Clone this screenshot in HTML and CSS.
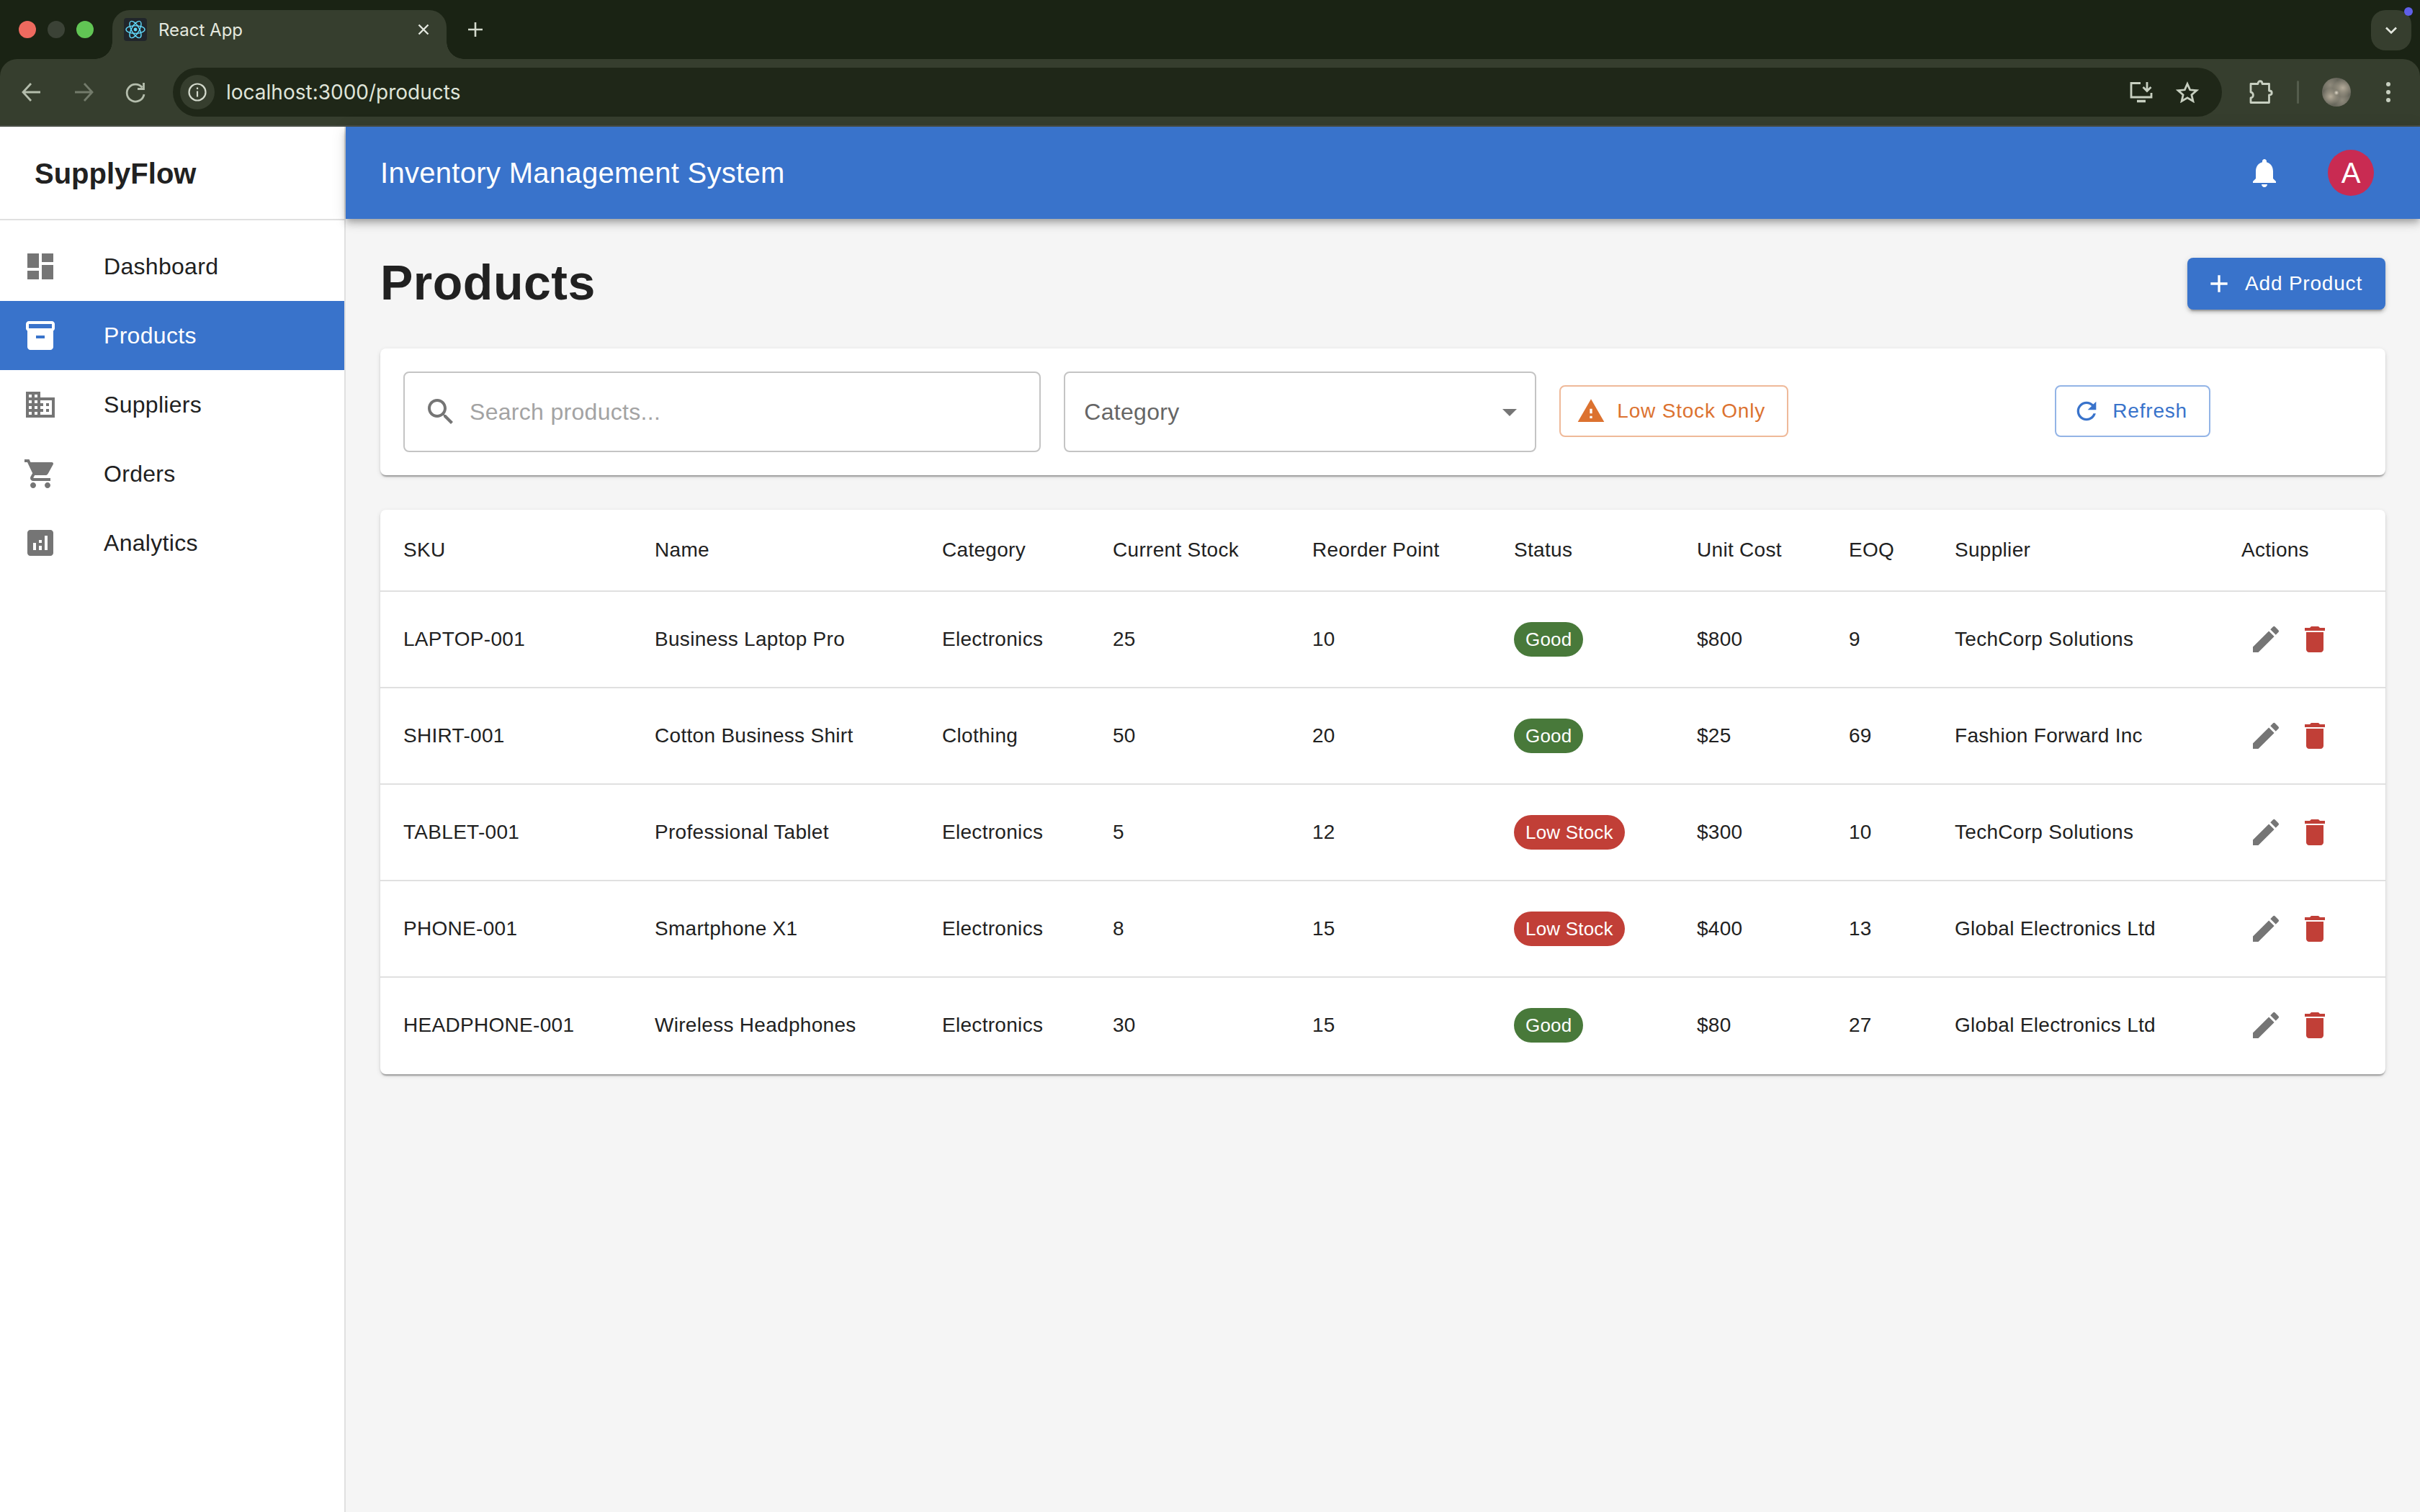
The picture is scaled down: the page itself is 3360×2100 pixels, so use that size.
FILE: index.html
```html
<!DOCTYPE html>
<html lang="en">
<head>
  <meta charset="UTF-8" />
  <title>React App</title>
  <link rel="stylesheet" href="styles.css">
</head>
<body>
  <svg class="defs" aria-hidden="true">
    <symbol id="i-edit" viewBox="0 0 24 24"><path d="M3 17.25V21h3.75L17.81 9.94l-3.75-3.75L3 17.25zM20.71 7.04c.39-.39.39-1.02 0-1.41l-2.34-2.34a.9959.9959 0 0 0-1.41 0l-1.83 1.83 3.75 3.75 1.83-1.83z"/></symbol>
    <symbol id="i-delete" viewBox="0 0 24 24"><path d="M6 19c0 1.1.9 2 2 2h8c1.1 0 2-.9 2-2V7H6v12zM19 4h-3.5l-1-1h-5l-1 1H5v2h14V4z"/></symbol>
  </svg>

  <header class="browser">
    <div class="tabstrip">
      <div class="lights">
        <span class="light red"></span>
        <span class="light off"></span>
        <span class="light green"></span>
      </div>
      <div class="tab">
        <span class="favicon">
          <svg viewBox="0 0 32 32" fill="none" stroke="#61dafb" stroke-width="1.4">
            <ellipse cx="16" cy="16" rx="13" ry="5.4"/>
            <ellipse cx="16" cy="16" rx="13" ry="5.4" transform="rotate(60 16 16)"/>
            <ellipse cx="16" cy="16" rx="13" ry="5.4" transform="rotate(120 16 16)"/>
            <circle cx="16" cy="16" r="2.4" fill="#61dafb" stroke="none"/>
          </svg>
        </span>
        <span class="tab-title">React App</span>
        <svg class="tab-close" viewBox="0 0 20 20" fill="none" stroke="#e4e8df" stroke-width="2.4"><path d="M3.5 3.5l13 13M16.500 3.500l-13 13"/></svg>
      </div>
      <svg class="new-tab" viewBox="0 0 24 24" fill="none" stroke="#d3d9cc" stroke-width="2.6"><path d="M12 2v20M2 12h20"/></svg>
      <div class="tab-search">
        <svg viewBox="0 0 20 20" fill="none" stroke="#e4e8df" stroke-width="2.6"><path d="M3 6.500l7 7 7-7"/></svg>
        <span class="tab-search-dot"></span>
      </div>
    </div>
    <div class="toolbar">
      <svg class="tool" viewBox="0 0 40 40" fill="none" stroke="#b4bdac" stroke-width="2.800"><path d="M32 20H8M19 8L8 20l11 12"/></svg>
      <svg class="tool" viewBox="0 0 40 40" fill="none" stroke="#737b6b" stroke-width="2.800"><path d="M8 20h24M21 8l11 12-11 12"/></svg>
      <svg class="tool" viewBox="0 0 40 40" fill="none" stroke="#b4bdac" stroke-width="2.800"><path d="M29.500 13.500A12 12 0 1 0 32 23"/><path d="M31.500 7v8.500H23" /></svg>
      <div class="omnibox">
        <span class="info-chip">
          <svg viewBox="0 0 28 28" fill="none" stroke="#d3d9cc" stroke-width="2.200"><circle cx="14" cy="14" r="11.500"/><path d="M14 12.500v8M14 7.500v2.600"/></svg>
        </span>
        <span class="url">localhost:3000/products</span>
        <div class="omni-actions">
          <svg viewBox="0 0 32 28" fill="none" stroke="#c7cfc0" stroke-width="2.800"><path d="M15 1.500H2v19.500h28v-6"/><path d="M10 26.500h12" stroke-width="3.500"/><path d="M24 0v12M18.500 7l5.500 5.500L29.500 7"/></svg>
          <svg viewBox="0 0 32 30" fill="none" stroke="#c7cfc0" stroke-width="2.800" stroke-linejoin="miter"><path d="M16 3.500l3.700 8.300 9 .9-6.800 6 2 8.800-7.900-4.600-7.900 4.600 2-8.800-6.800-6 9-.9z"/></svg>
        </div>
      </div>
      <svg class="ext" viewBox="0 0 36 36" fill="none" stroke="#c7cfc0" stroke-width="2.800" stroke-linejoin="round"><path d="M4 6.500h10c0-5 6-5 6 0h9.500v9.500c5 0 5 6 0 6v10.500H4V26c4.500 0 4.500-8 0-8z"/></svg>
      <span class="tool-divider"></span>
      <span class="profile"></span>
      <svg class="tool dots" viewBox="0 0 40 40" fill="#c7cfc0"><circle cx="20" cy="9" r="3"/><circle cx="20" cy="20" r="3"/><circle cx="20" cy="31" r="3"/></svg>
    </div>
  </header>

  <div class="app">
    <aside class="sidebar">
      <div class="brand">SupplyFlow</div>
      <nav class="nav">
        <a class="nav-item">
          <svg class="icon" viewBox="0 0 24 24"><path d="M3 13h8V3H3v10zm0 8h8v-6H3v6zm10 0h8V11h-8v10zm0-18v6h8V3h-8z"/></svg>
          <span>Dashboard</span>
        </a>
        <a class="nav-item active">
          <svg class="icon" viewBox="0 0 24 24"><path d="M20 2H4c-1 0-2 .9-2 2v3.010c0 .72.43 1.340 1 1.690V20c0 1.100 1.100 2 2 2h14c.9 0 2-.9 2-2V8.700c.57-.35 1-.97 1-1.690V4c0-1.100-1-2-2-2zm-5 12H9v-2h6v2zm5-7H4V4l16-.02V7z"/></svg>
          <span>Products</span>
        </a>
        <a class="nav-item">
          <svg class="icon" viewBox="0 0 24 24"><path d="M12 7V3H2v18h20V7H12zM6 19H4v-2h2v2zm0-4H4v-2h2v2zm0-4H4V9h2v2zm0-4H4V5h2v2zm4 12H8v-2h2v2zm0-4H8v-2h2v2zm0-4H8V9h2v2zm0-4H8V5h2v2zm10 12h-8v-2h2v-2h-2v-2h2v-2h-2V9h8v10zm-2-8h-2v2h2v-2zm0 4h-2v2h2v-2z"/></svg>
          <span>Suppliers</span>
        </a>
        <a class="nav-item">
          <svg class="icon" viewBox="0 0 24 24"><path d="M7 18c-1.100 0-1.990.9-1.990 2S5.900 22 7 22s2-.9 2-2-.9-2-2-2zM1 2v2h2l3.600 7.590-1.350 2.450c-.16.28-.25.61-.25.96 0 1.100.9 2 2 2h12v-2H7.420c-.14 0-.25-.11-.25-.25l.03-.12.9-1.630h7.450c.75 0 1.410-.41 1.750-1.030l3.580-6.490c.08-.14.12-.31.12-.48 0-.55-.45-1-1-1H5.210l-.94-2H1zm16 16c-1.100 0-1.990.9-1.990 2s.89 2 1.990 2 2-.9 2-2-.9-2-2-2z"/></svg>
          <span>Orders</span>
        </a>
        <a class="nav-item">
          <svg class="icon" viewBox="0 0 24 24"><path d="M19 3H5c-1.100 0-2 .9-2 2v14c0 1.100.9 2 2 2h14c1.100 0 2-.9 2-2V5c0-1.100-.9-2-2-2zM9 17H7v-5h2v5zm4 0h-2v-3h2v3zm0-5h-2v-2h2v2zm4 5h-2V7h2v10z"/></svg>
          <span>Analytics</span>
        </a>
      </nav>
    </aside>

    <div class="content">
      <div class="appbar">
        <div class="appbar-title">Inventory Management System</div>
        <svg class="icon bell" viewBox="0 0 24 24"><path d="M12 22c1.100 0 2-.9 2-2h-4c0 1.100.89 2 2 2zm6-6v-5c0-3.070-1.640-5.640-4.500-6.320V4c0-.83-.67-1.500-1.500-1.500s-1.500.67-1.500 1.500v.68C7.630 5.360 6 7.920 6 11v5l-2 2v1h16v-1l-2-2z"/></svg>
        <div class="avatar">A</div>
      </div>

      <main class="main">
        <div class="page-head">
          <h1>Products</h1>
          <button class="btn btn-primary">
            <svg viewBox="0 0 24 24"><path d="M19 13h-6v6h-2v-6H5v-2h6V5h2v6h6v2z"/></svg>
            Add Product
          </button>
        </div>

        <section class="card filters">
          <div class="field field-search">
            <svg class="icon" viewBox="0 0 24 24"><path d="M15.500 14h-.79l-.28-.27C15.410 12.590 16 11.110 16 9.500 16 5.910 13.090 3 9.500 3S3 5.910 3 9.500 5.910 16 9.500 16c1.610 0 3.090-.59 4.230-1.570l.27.28v.79l5 4.990L20.490 19l-4.990-5zm-6 0C7.010 14 5 11.990 5 9.500S7.010 5 9.500 5 14 7.010 14 9.500 11.990 14 9.500 14z"/></svg>
            <input type="text" placeholder="Search products...">
          </div>
          <div class="field field-select">
            <span>Category</span>
            <svg class="icon" viewBox="0 0 24 24"><path d="M7 10l5 5 5-5z"/></svg>
          </div>
          <div class="filter-cell">
            <button class="btn btn-warning">
              <svg viewBox="0 0 24 24"><path d="M1 21h22L12 2 1 21zm12-3h-2v-2h2v2zm0-4h-2v-4h2v4z"/></svg>
              Low Stock Only
            </button>
          </div>
          <div class="filter-cell">
            <button class="btn btn-outline">
              <svg viewBox="0 0 24 24"><path d="M17.650 6.350C16.200 4.900 14.210 4 12 4c-4.420 0-7.990 3.580-7.990 8s3.570 8 7.990 8c3.730 0 6.840-2.550 7.730-6h-2.080c-.82 2.330-3.040 4-5.650 4-3.310 0-6-2.690-6-6s2.690-6 6-6c1.660 0 3.140.69 4.220 1.780L13 11h7V4l-2.350 2.350z"/></svg>
              Refresh
            </button>
          </div>
        </section>

        <section class="card">
          <table class="products">
            <colgroup>
              <col class="c-sku"><col class="c-name"><col class="c-cat"><col class="c-stock"><col class="c-reorder">
              <col class="c-status"><col class="c-cost"><col class="c-eoq"><col class="c-supplier"><col class="c-actions">
            </colgroup>
            <thead>
              <tr><th>SKU</th><th>Name</th><th>Category</th><th>Current Stock</th><th>Reorder Point</th><th>Status</th><th>Unit Cost</th><th>EOQ</th><th>Supplier</th><th>Actions</th></tr>
            </thead>
            <tbody>
              <tr>
                <td>LAPTOP-001</td><td>Business Laptop Pro</td><td>Electronics</td><td>25</td><td>10</td>
                <td><span class="chip good">Good</span></td><td>$800</td><td>9</td><td>TechCorp Solutions</td>
                <td class="actions"><svg class="act edit"><use href="#i-edit"/></svg><svg class="act del"><use href="#i-delete"/></svg></td>
              </tr>
              <tr>
                <td>SHIRT-001</td><td>Cotton Business Shirt</td><td>Clothing</td><td>50</td><td>20</td>
                <td><span class="chip good">Good</span></td><td>$25</td><td>69</td><td>Fashion Forward Inc</td>
                <td class="actions"><svg class="act edit"><use href="#i-edit"/></svg><svg class="act del"><use href="#i-delete"/></svg></td>
              </tr>
              <tr>
                <td>TABLET-001</td><td>Professional Tablet</td><td>Electronics</td><td>5</td><td>12</td>
                <td><span class="chip low">Low Stock</span></td><td>$300</td><td>10</td><td>TechCorp Solutions</td>
                <td class="actions"><svg class="act edit"><use href="#i-edit"/></svg><svg class="act del"><use href="#i-delete"/></svg></td>
              </tr>
              <tr>
                <td>PHONE-001</td><td>Smartphone X1</td><td>Electronics</td><td>8</td><td>15</td>
                <td><span class="chip low">Low Stock</span></td><td>$400</td><td>13</td><td>Global Electronics Ltd</td>
                <td class="actions"><svg class="act edit"><use href="#i-edit"/></svg><svg class="act del"><use href="#i-delete"/></svg></td>
              </tr>
              <tr>
                <td>HEADPHONE-001</td><td>Wireless Headphones</td><td>Electronics</td><td>30</td><td>15</td>
                <td><span class="chip good">Good</span></td><td>$80</td><td>27</td><td>Global Electronics Ltd</td>
                <td class="actions"><svg class="act edit"><use href="#i-edit"/></svg><svg class="act del"><use href="#i-delete"/></svg></td>
              </tr>
            </tbody>
          </table>
        </section>
      </main>
    </div>
  </div>
</body>
</html>
```

FILE: styles.css
```css
* {
  box-sizing: border-box;
}
body {
  margin: 0;
  height: 100vh;
  display: flex;
  flex-direction: column;
  font-family: "Liberation Sans", Arial, sans-serif;
  color: #212121;
  background: #f5f5f5;
  overflow: hidden;
}
.defs {
  display: none;
}
.icon {
  width: 48px;
  height: 48px;
  flex: none;
  fill: #757575;
}

/* browser chrome */
.browser {
  background: #1a2314;
  flex: none;
  font-family: Inter, "Liberation Sans", sans-serif;
}
.tabstrip {
  height: 82px;
  display: flex;
  padding-left: 26px;
  padding-right: 12px;
}
.lights {
  display: flex;
  gap: 16px;
  padding-top: 29px;
}
.light {
  width: 24px;
  height: 24px;
  border-radius: 50%;
}
.light.red { background: #ee6a5f; }
.light.off { background: #3b4236; }
.light.green { background: #61c554; }
.tab {
  position: relative;
  margin-left: 26px;
  margin-top: 14px;
  width: 464px;
  height: 68px;
  padding: 0 22px 14px 16px;
  display: flex;
  align-items: center;
  background: #363e2e;
  border-radius: 24px 24px 0 0;
}
.tab::before,
.tab::after {
  content: "";
  position: absolute;
  bottom: 0;
  width: 24px;
  height: 24px;
}
.tab::before {
  left: -24px;
  background: radial-gradient(circle at 0 0, transparent 23.5px, #363e2e 24px);
}
.tab::after {
  right: -24px;
  background: radial-gradient(circle at 100% 0, transparent 23.5px, #363e2e 24px);
}
.favicon {
  width: 32px;
  height: 32px;
  border-radius: 4px;
  background: #21262b;
}
.favicon svg {
  display: block;
}
.tab-title {
  margin-left: 16px;
  font-size: 24px;
  color: #e4e8df;
  flex: 1;
}
.tab-close {
  width: 20px;
  height: 20px;
}
.new-tab {
  width: 24px;
  height: 24px;
  margin: 29px 0 0 28px;
}
.tab-search {
  position: relative;
  margin: 14px 0 0 auto;
  width: 56px;
  height: 56px;
  border-radius: 20px;
  background: #363e2e;
  display: flex;
  align-items: center;
  justify-content: center;
}
.tab-search svg {
  width: 20px;
  height: 20px;
}
.tab-search-dot {
  position: absolute;
  right: -2px;
  top: -4px;
  width: 12px;
  height: 12px;
  border-radius: 50%;
  background: #5f5fe8;
}
.toolbar {
  height: 94px;
  display: flex;
  align-items: center;
  gap: 32px;
  padding: 0 24px;
  background: #363e2e;
  border-bottom: 2px solid #4a4f47;
  border-radius: 24px 24px 0 0;
}
.tool {
  width: 40px;
  height: 40px;
  flex: none;
}
.omnibox {
  flex: 1;
  height: 68px;
  display: flex;
  align-items: center;
  padding: 0 32px 0 10px;
  background: #1f2718;
  border-radius: 34px;
}
.info-chip {
  width: 48px;
  height: 48px;
  border-radius: 50%;
  background: #363e2e;
  display: flex;
  align-items: center;
  justify-content: center;
}
.info-chip svg {
  width: 28px;
  height: 28px;
}
.url {
  margin-left: 16px;
  font-size: 28px;
  color: #dfe4d9;
}
.omni-actions {
  margin-left: auto;
  display: flex;
  gap: 32px;
  align-items: center;
}
.omni-actions svg {
  width: 32px;
  height: 30px;
}
.ext {
  width: 36px;
  height: 36px;
  flex: none;
  margin-left: 4px;
}
.tool-divider {
  width: 3px;
  height: 32px;
  background: #545c4c;
  border-radius: 2px;
  flex: none;
}
.profile {
  width: 40px;
  height: 40px;
  flex: none;
  border-radius: 50%;
  background:
    radial-gradient(circle at 50% 52%, #e0d8c8 0, transparent 12%),
    radial-gradient(ellipse at 30% 65%, #b5ac9a 0, transparent 32%),
    radial-gradient(ellipse at 72% 35%, #b5ac9a 0, transparent 34%),
    radial-gradient(ellipse at 70% 78%, #8f8a7c 0, transparent 30%),
    radial-gradient(ellipse at 28% 25%, #8f8a7c 0, transparent 30%),
    #68675c;
}

/* app shell */
.app {
  flex: 1;
  display: flex;
  min-height: 0;
}
.sidebar {
  width: 480px;
  flex: none;
  background: #fff;
  border-right: 2px solid #e0e0e0;
}
.brand {
  height: 130px;
  padding: 2px 48px 0;
  display: flex;
  align-items: center;
  font-size: 40px;
  font-weight: bold;
  border-bottom: 2px solid #e0e0e0;
}
.nav {
  padding-top: 16px;
}
.nav-item {
  height: 96px;
  display: flex;
  align-items: center;
  padding-left: 32px;
  font-size: 32px;
  letter-spacing: 0.3px;
}
.nav-item .icon {
  margin-right: 64px;
}
.nav-item.active {
  background: #3973cb;
  color: #fff;
}
.nav-item.active .icon {
  fill: #fff;
}
.content {
  flex: 1;
  min-width: 0;
  display: flex;
  flex-direction: column;
}
.appbar {
  height: 128px;
  flex: none;
  display: flex;
  align-items: center;
  padding: 0 64px 0 48px;
  background: #3973cb;
  color: #fff;
  box-shadow: 0 4px 8px -2px rgba(0,0,0,.2), 0 8px 10px rgba(0,0,0,.14), 0 2px 20px rgba(0,0,0,.12);
  position: relative;
}
.appbar-title {
  flex: 1;
  font-size: 40px;
  letter-spacing: 0.3px;
}
.bell {
  fill: #fff;
}
.avatar {
  width: 64px;
  height: 64px;
  margin-left: 64px;
  border-radius: 50%;
  background: #c92b52;
  display: flex;
  align-items: center;
  justify-content: center;
  font-size: 40px;
}

/* main */
.main {
  flex: 1;
  padding: 48px;
}
.page-head {
  display: flex;
  align-items: center;
  justify-content: space-between;
  margin-bottom: 48px;
}
h1 {
  margin: 0 0 4px;
  font-size: 68px;
  line-height: 80px;
  font-weight: bold;
  letter-spacing: 0.5px;
}
.btn {
  height: 72px;
  display: inline-flex;
  align-items: center;
  gap: 16px;
  font-family: inherit;
  font-size: 28px;
  letter-spacing: 0.8px;
  border-radius: 8px;
  background: none;
  cursor: pointer;
}
.btn svg {
  width: 40px;
  height: 40px;
  fill: currentColor;
}
.btn-primary {
  padding: 0 32px 0 24px;
  border: none;
  background: #3973cb;
  color: #fff;
  box-shadow: 0 6px 2px -4px rgba(0,0,0,.2), 0 4px 4px rgba(0,0,0,.14), 0 2px 10px rgba(0,0,0,.12);
}
.btn-warning {
  padding: 0 30px 0 22px;
  border: 2px solid #efb999;
  color: #dc7230;
}
.btn-outline {
  padding: 0 30px 0 22px;
  border: 2px solid #93b4e6;
  color: #3973cb;
}
.card {
  background: #fff;
  border-radius: 8px;
  box-shadow: 0 4px 2px -2px rgba(0,0,0,.2), 0 2px 2px rgba(0,0,0,.14), 0 2px 6px rgba(0,0,0,.12);
}
.filters {
  display: grid;
  grid-template-columns: repeat(12, 1fr);
  gap: 32px;
  padding: 32px;
  margin-bottom: 48px;
  align-items: center;
}
.field {
  height: 112px;
  display: flex;
  align-items: center;
  border: 2px solid #c4c4c4;
  border-radius: 8px;
  font-size: 32px;
  letter-spacing: 0.3px;
}
.field-search {
  grid-column: span 4;
  padding-left: 26px;
  gap: 16px;
}
.field-search input {
  flex: 1;
  min-width: 0;
  border: none;
  outline: none;
  padding: 0;
  font: inherit;
  letter-spacing: inherit;
  color: #212121;
}
.field-search input::placeholder {
  color: #a3a3a3;
  opacity: 1;
}
.field-select {
  grid-column: span 3;
  padding: 0 11px 0 26px;
  justify-content: space-between;
  color: #666;
}
.filter-cell {
  grid-column: span 3;
  display: flex;
  padding-bottom: 2px;
}
.filter-cell:last-child {
  grid-column: span 2;
}

/* table */
.products {
  width: 100%;
  table-layout: fixed;
  border-collapse: separate;
  border-spacing: 0;
  font-size: 28px;
  letter-spacing: 0.3px;
}
.c-sku { width: 349px; }
.c-name { width: 399px; }
.c-cat { width: 237px; }
.c-stock { width: 277px; }
.c-reorder { width: 280px; }
.c-status { width: 254px; }
.c-cost { width: 211px; }
.c-eoq { width: 147px; }
.c-supplier { width: 398px; }
.c-actions { width: 232px; }
.products th,
.products td {
  padding: 0 0 0 32px;
  text-align: left;
  font-weight: normal;
  border-bottom: 2px solid #e0e0e0;
}
.products thead tr {
  height: 114px;
}
.products tbody tr {
  height: 134px;
}
.products tbody tr:last-child td {
  border-bottom-color: transparent;
}
.chip {
  display: flex;
  align-items: center;
  width: fit-content;
  height: 48px;
  padding: 0 16px;
  border-radius: 24px;
  font-size: 26px;
  letter-spacing: 0.2px;
  color: #fff;
}
.chip.good { background: #48793a; }
.chip.low { background: #c13f37; }
.products td.actions {
  padding-left: 42px;
  font-size: 0;
}
.act {
  width: 48px;
  height: 48px;
  vertical-align: top;
}
.act.edit {
  fill: #757575;
  margin-right: 20px;
}
.act.del {
  fill: #c13f37;
}
```
